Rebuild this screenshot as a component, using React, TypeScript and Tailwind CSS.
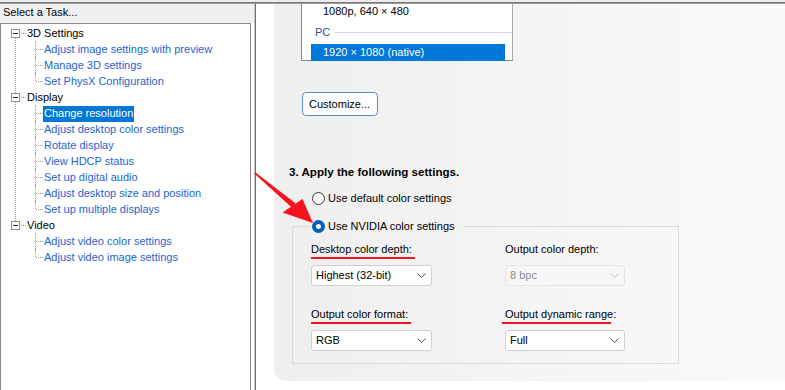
import React from "react";

const groups = [
  {
    label: "3D Settings",
    items: ["Adjust image settings with preview", "Manage 3D settings", "Set PhysX Configuration"],
  },
  {
    label: "Display",
    items: [
      "Change resolution",
      "Adjust desktop color settings",
      "Rotate display",
      "View HDCP status",
      "Set up digital audio",
      "Adjust desktop size and position",
      "Set up multiple displays",
    ],
  },
  {
    label: "Video",
    items: ["Adjust video color settings", "Adjust video image settings"],
  },
];

function Tree() {
  return (
    <div className="h-full w-[251px] border-l border-t border-r border-[#8a8a8a] bg-white pt-[1px]">
      {groups.map((g, gi) => (
        <div key={g.label} className="relative">
          {gi < groups.length - 1 && (
            <div className="absolute left-[14px] top-[13px] bottom-[-4px] border-l border-dotted border-[#9a9a9a]" />
          )}
          <div className="flex h-4 items-center">
            <div className="ml-[10px] flex h-[9px] w-[9px] items-center justify-center border border-[#919191] bg-white">
              <div className="h-px w-[5px] bg-[#333]" />
            </div>
            <div className="ml-[1px] w-[5px] border-t border-dotted border-[#9a9a9a]" />
            <span className="ml-[1px] text-black">{g.label}</span>
          </div>
          {g.items.map((it, ii) => {
            const last = ii === g.items.length - 1;
            const sel = it === "Change resolution";
            return (
              <div key={it} className="relative flex h-4 items-center pl-[35px]">
                <div
                  className={
                    last
                      ? "absolute left-[34px] top-0 h-[8px] border-l border-dotted border-[#9a9a9a]"
                      : "absolute left-[34px] top-0 h-4 border-l border-dotted border-[#9a9a9a]"
                  }
                />
                <div className="w-[7px] border-t border-dotted border-[#9a9a9a]" />
                <span
                  className={
                    sel
                      ? "mt-[1px] h-[16px] bg-[#0078d7] px-[1px] leading-[15px] text-white"
                      : "px-[1px] text-[#1e64d2]"
                  }
                >
                  {it}
                </span>
              </div>
            );
          })}
        </div>
      ))}
    </div>
  );
}

function Chevron({ color }: { color: string }) {
  return (
    <svg width="9" height="5" viewBox="0 0 9 5" fill="none">
      <path d="M0.5 0.5 L4.5 4.5 L8.5 0.5" stroke={color} strokeWidth="1" />
    </svg>
  );
}

function Select({ value, disabled }: { value: string; disabled?: boolean }) {
  return (
    <div
      className={
        disabled
          ? "flex h-[21px] items-center justify-between rounded-[3px] border border-[#e4e4e4] bg-[#f6f6f6] pl-[4px] pr-[5px] text-[#8c8c8c]"
          : "flex h-[21px] items-center justify-between rounded-[3px] border border-[#cfcfcf] bg-white pl-[4px] pr-[5px] text-black"
      }
    >
      <span>{value}</span>
      <Chevron color={disabled ? "#c4c4c4" : "#555555"} />
    </div>
  );
}

export default function App() {
  return (
    <div className="relative h-[390px] w-[785px] overflow-hidden bg-white font-['Liberation_Sans',Arial,sans-serif] text-[11px] text-black">
      <div className="h-[2px] bg-[#ececec]" />
      <div className="h-px bg-[#7a7a7a]" />
      <div className="h-px bg-[#9a9a9a]" />
      <div className="flex h-[386px]">
        {/* Left column */}
        <div className="flex w-[254px] flex-col">
          <div className="h-[19px] bg-[#f0f0f0] pl-[3px] leading-[17px]">Select a Task...</div>
          <div className="flex-1 bg-white">
            <Tree />
          </div>
        </div>
        {/* Separator */}
        <div className="w-px bg-[#c8c8c8]" />
        <div className="w-px bg-[#6e6e6e]" />
        {/* Right */}
        <div className="flex-1 bg-white pl-[18px]">
          <div className="flex h-[377px] flex-col items-start rounded-bl-[12px] bg-linear-to-r from-[#efefef] to-[#fafafa]">
            <div className="ml-[27px] h-[57px] w-[212px] border-l border-r border-b border-l-[#828790] border-b-[#828790] border-r-[#a8a8a8] bg-white">
              <div className="h-[15px] pl-[21px] leading-[15px]">1080p, 640 × 480</div>
              <div className="mt-[5px] flex h-4 items-center pl-[13px]">
                <span className="text-[#2d4fa6]">PC</span>
                <div className="ml-[5px] h-px flex-1 bg-[#cdd5ea]" />
              </div>
              <div className="ml-[9px] mt-[4px] h-[17px] w-[194px] bg-[#0078d7] pl-[12px] leading-[17px] text-white">
                1920 × 1080 (native)
              </div>
            </div>

            <div className="ml-[28px] mt-[31px] flex h-[24px] w-[76px] items-center rounded-[4px] border border-[#5a8ccc] bg-[#fdfdfd] pl-[6px]">
              Customize...
            </div>

            <div className="ml-[15px] mt-[48px] text-[11.6px] font-bold leading-4">3. Apply the following settings.</div>

            <div className="ml-[38px] mt-[10px] flex h-4 items-center gap-[3px]">
              <div className="h-[13px] w-[13px] rounded-full border border-[#3a3a3a] bg-[#f7f7f7]" />
              <span>Use default color settings</span>
            </div>

            <fieldset className="ml-[18px] mt-[12px] h-[146px] w-[387px] border border-[#dadada]">
              <legend className="ml-[17px] pl-[2px] pr-[8px]">
                <div className="flex h-4 items-center gap-[3px]">
                  <div className="flex h-[13px] w-[13px] items-center justify-center rounded-full bg-[#005fb8]">
                    <div className="h-[5px] w-[5px] rounded-full bg-white" />
                  </div>
                  <span>Use NVIDIA color settings</span>
                </div>
              </legend>
              <div className="mt-[8px] grid grid-cols-[121px_120px] gap-x-[73px] pl-[18px]">
                <div>
                  <div className="leading-[15px]">Desktop color depth:</div>
                  <div className="h-[2px] w-[104px] bg-[#f5141e]" />
                  <div className="mt-[6px]">
                    <Select value="Highest (32-bit)" />
                  </div>
                </div>
                <div>
                  <div className="leading-[15px]">Output color depth:</div>
                  <div className="h-[2px]" />
                  <div className="mt-[6px]">
                    <Select value="8 bpc" disabled />
                  </div>
                </div>
                <div className="mt-[21px]">
                  <div className="leading-[15px]">Output color format:</div>
                  <div className="h-[2px] w-[100px] bg-[#f5141e]" />
                  <div className="mt-[6px]">
                    <Select value="RGB" />
                  </div>
                </div>
                <div className="mt-[21px]">
                  <div className="leading-[15px]">Output dynamic range:</div>
                  <div className="-ml-[3px] h-[2px] w-[109px] bg-[#f5141e]" />
                  <div className="mt-[6px]">
                    <Select value="Full" />
                  </div>
                </div>
              </div>
            </fieldset>
          </div>
        </div>
      </div>

      {/* Red annotation arrow */}
      <svg
        className="pointer-events-none absolute left-0 top-0"
        width="785"
        height="390"
        viewBox="0 0 785 390"
      >
        <polygon points="254.2,173.6 255.2,172.2 295.5,203.2 291.8,207.6" fill="#f5141e" />
        <polygon points="313,223 282.5,212.5 302.5,199" fill="#f5141e" />
      </svg>
    </div>
  );
}
